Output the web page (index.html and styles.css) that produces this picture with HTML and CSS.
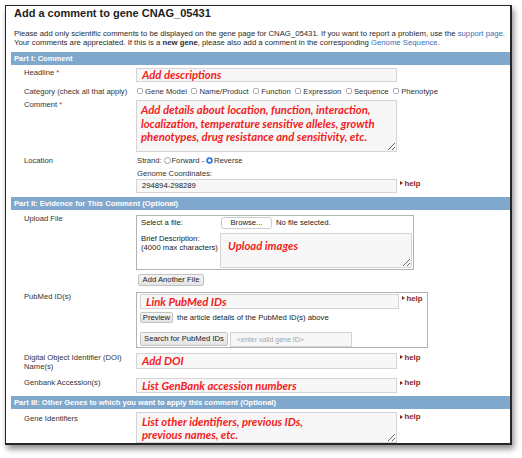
FILE: index.html
```html
<!DOCTYPE html>
<html>
<head>
<meta charset="utf-8">
<title>Add a comment to gene CNAG_05431</title>
<link rel="stylesheet" href="styles.css">
</head>
<body>
<div class="frame">
  <h1 class="title">Add a comment to gene CNAG_05431</h1>
  <p class="intro">Please add only scientific comments to be displayed on the gene page for CNAG_05431. If you want to report a problem, use the <a href="#">support page</a>.<br>Your comments are appreciated. If this is a <b>new gene</b>, please also add a comment in the corresponding <a href="#">Genome Sequence</a>.</p>

  <div class="bar">Part I: Comment</div>

  <div class="row r-headline">
    <div class="label">Headline <span class="req">*</span></div>
    <div class="input w-main h14 red">Add descriptions</div>
  </div>

  <div class="row r-category">
    <div class="label">Category (check all that apply)</div>
    <div class="checks">
      <span class="opt"><i class="cb"></i>Gene Model</span>
      <span class="opt"><i class="cb"></i>Name/Product</span>
      <span class="opt"><i class="cb"></i>Function</span>
      <span class="opt"><i class="cb"></i>Expression</span>
      <span class="opt"><i class="cb"></i>Sequence</span>
      <span class="opt"><i class="cb"></i>Phenotype</span>
    </div>
  </div>

  <div class="row r-comment">
    <div class="label">Comment <span class="req">*</span></div>
    <textarea class="ta ta-comment red">Add details about location, function, interaction,
localization, temperature sensitive alleles, growth
phenotypes, drug resistance and sensitivity, etc.</textarea>
  </div>

  <div class="row r-location">
    <div class="label">Location</div>
    <div class="loc">
      <div class="strand">Strand: <i class="rb"></i>Forward - <i class="rb on"></i>Reverse</div>
      <div class="coord-label">Genome Coordinates:</div>
      <div class="with-help">
        <div class="input w-main h14 plain">294894-298289</div>
        <a class="help" href="#"><i class="tri"></i>help</a>
      </div>
    </div>
  </div>

  <div class="bar bar2">Part II: Evidence for This Comment (Optional)</div>

  <div class="row r-upload">
    <div class="label">Upload File</div>
    <div class="box upload">
      <div class="up-row1">
        <span class="up-left">Select a file:</span>
        <button class="btn btn-browse">Browse...</button>
        <span class="nofile">No file selected.</span>
      </div>
      <div class="up-row2">
        <span class="up-left up-desc">Brief Description:<br>(4000 max characters)</span>
        <textarea class="ta ta-upload red">Upload images</textarea>
      </div>
    </div>
  </div>

  <div class="row r-addfile">
    <div class="label"></div>
    <button class="btn btn-gray btn-add">Add Another File</button>
  </div>

  <div class="row r-pubmed">
    <div class="label">PubMed ID(s)</div>
    <div class="box pubmed">
      <div class="with-help">
        <div class="input w-pub h15 red">Link PubMed IDs</div>
        <a class="help" href="#"><i class="tri"></i>help</a>
      </div>
      <div class="pv-row">
        <button class="btn btn-gray btn-preview">Preview</button>
        <span class="pv-text">the article details of the PubMed ID(s) above</span>
      </div>
      <div class="search-row">
        <button class="btn btn-gray btn-search">Search for PubMed IDs</button>
        <div class="input w-gene h15 ph">&lt;enter valid gene ID&gt;</div>
      </div>
    </div>
  </div>

  <div class="row r-doi">
    <div class="label">Digital Object Identifier (DOI)<br>Name(s)</div>
    <div class="with-help">
      <div class="input w-main h16 red">Add DOI</div>
      <a class="help" href="#"><i class="tri"></i>help</a>
    </div>
  </div>

  <div class="row r-genbank">
    <div class="label">Genbank Accession(s)</div>
    <div class="with-help">
      <div class="input w-main h15 red">List <span class="spell">GenBank</span> accession numbers</div>
      <a class="help" href="#"><i class="tri"></i>help</a>
    </div>
  </div>

  <div class="bar bar3">Part III: Other Genes to which you want to apply this comment (Optional)</div>

  <div class="row r-geneids">
    <div class="label">Gene Identifiers</div>
    <div class="with-help">
      <textarea class="ta ta-gene red">List other identifiers, previous IDs,
previous names, etc.</textarea>
      <a class="help" href="#"><i class="tri"></i>help</a>
    </div>
  </div>

  <div class="band"></div>
</div>
</body>
</html>
```

FILE: styles.css
```css
* { box-sizing: border-box; }

html, body {
  margin: 0;
  padding: 0;
  background: #fff;
}

body {
  width: 522px;
  height: 458px;
  overflow: hidden;
  font-family: "Liberation Sans", Arial, sans-serif;
  color: #333;
}

.frame {
  margin: 5px 0 0 5px;
  width: 507px;
  height: 440px;
  border-style: solid;
  border-color: #262626;
  border-width: 1px 2px 2px 1px;
  box-shadow: 2px 4px 6px rgba(0, 0, 0, 0.45);
  background: #fff;
  overflow: hidden;
}

.title {
  margin: 0;
  padding: 1.2px 0 0 8px;
  font-size: 11px;
  line-height: 13px;
  font-weight: bold;
  color: #1e1e1e;
}

.intro {
  margin: 8.4px 0 0 8px;
  font-size: 7.74px;
  line-height: 9.3px;
  white-space: nowrap;
  color: #2a2a2a;
}

.intro a {
  color: #3a6fb3;
  text-decoration: none;
}

.bar {
  margin: 4.8px 0 0 5px;
  height: 13px;
  padding-left: 3px;
  background: #7fa8cc;
  color: #fff;
  font-weight: bold;
  font-size: 7.6px;
  line-height: 13px;
  white-space: nowrap;
}

.bar2 { margin-top: 4px; }
.bar3 { margin-top: 3px; }

.row {
  display: flex;
  align-items: flex-start;
  padding-left: 18px;
}

.label {
  width: 112px;
  flex: none;
  font-size: 7.65px;
  line-height: 9px;
  color: #333;
  white-space: nowrap;
}

.req { color: #e02020; }

.r-headline { margin-top: 3px; }
.r-category { margin-top: 5px; }
.r-comment { margin-top: 4px; }
.r-location { margin-top: 4px; }
.r-upload { margin-top: 5px; }
.r-upload .label { margin-top: -1px; }
.r-addfile { margin-top: 4px; }
.r-pubmed { margin-top: 6px; }
.r-doi { margin-top: 5px; }
.r-doi .label { padding-top: 0.5px; }
.r-genbank { margin-top: 7px; }
.r-geneids { margin-top: 3px; }
.r-geneids .label { padding-top: 1.5px; }

/* inputs */
.input {
  flex: none;
  border: 1px solid #d4d4d4;
  background: #f7f7f7;
  padding-left: 5px;
  white-space: nowrap;
  overflow: hidden;
}

.w-main { width: 261px; }
.w-pub { width: 259px; }
.w-gene { width: 122px; margin-left: 2px; }

.h14 { height: 14px; line-height: 12px; }
.h15 { height: 15px; line-height: 13px; }
.h16 { height: 16px; line-height: 14px; }

.red {
  font-family: Lato, "Open Sans", sans-serif;
  font-weight: bold;
  font-style: italic;
  color: #f21d1d;
  font-size: 11.3px;
}

.plain {
  font-size: 7.7px;
  color: #222;
}

.ph {
  font-size: 7px;
  color: #a5a5a5;
  padding-left: 6px;
}

.spell {
  text-decoration: underline wavy #e03030;
  text-decoration-thickness: 1px;
  text-underline-offset: 2px;
}

.ta {
  display: block;
  flex: none;
  margin: 0;
  border: 1px solid #d4d4d4;
  background: #f7f7f7;
  padding: 2.5px 4px 0 4px;
  line-height: 13.4px;
  white-space: pre;
  overflow: hidden;
  resize: both;
  outline: none;
}

.ta-comment { width: 261px; height: 52px; }
.ta-gene { width: 261px; height: 31px; padding-left: 5px; padding-top: 1.5px; line-height: 13px; }
.ta-upload { width: 192px; height: 35px; padding: 5px 0 0 7px; }

/* category */
.checks {
  display: flex;
  align-items: center;
  height: 9px;
  gap: 4.6px;
  margin-left: 1px;
  font-size: 7.7px;
  color: #333;
}

.opt {
  display: inline-flex;
  align-items: center;
  gap: 2px;
  white-space: nowrap;
}

.cb {
  display: inline-block;
  width: 6px;
  height: 6px;
  border: 1px solid #a9a9a9;
  border-radius: 1.5px;
  background: #fff;
}

/* location */
.loc { display: flex; flex-direction: column; }

.strand {
  display: flex;
  align-items: center;
  height: 9px;
  margin-left: 1px;
  font-size: 7.7px;
  color: #333;
  white-space: pre;
}

.rb {
  display: inline-block;
  width: 7px;
  height: 7px;
  border-radius: 50%;
  border: 1px solid #a5a5a5;
  background: #fff;
  margin-right: 0.5px;
}

.rb.on {
  border-color: #2d7de0;
  background: radial-gradient(circle, #fff 0 1.2px, #2f80e6 1.6px);
}

.coord-label {
  margin-top: 4px;
  margin-left: 1px;
  height: 9px;
  font-size: 7.7px;
  line-height: 9px;
  color: #333;
}

.loc .with-help { margin-top: 1px; }

/* help */
.with-help {
  display: flex;
  align-items: flex-start;
}

.help {
  display: inline-flex;
  align-items: center;
  margin-left: 3px;
  height: 9px;
  font-size: 7.8px;
  font-weight: bold;
  color: #862525;
  text-decoration: none;
}

.tri {
  display: inline-block;
  width: 0;
  height: 0;
  border-left: 3px solid #862525;
  border-top: 2.5px solid transparent;
  border-bottom: 2.5px solid transparent;
  margin-right: 1.5px;
}

/* boxes */
.box {
  flex: none;
  border: 1px solid #b3b3b3;
  background: #fff;
}

.upload {
  width: 278px;
  height: 55px;
  padding: 1px 1px 0 4px;
}

.up-row1 {
  display: flex;
  align-items: center;
  height: 12px;
  font-size: 7.7px;
  color: #222;
}

.up-left {
  width: 79px;
  flex: none;
  font-size: 7.7px;
  color: #222;
}

.up-row2 {
  display: flex;
  align-items: flex-start;
  margin-top: 4px;
}

.up-desc {
  line-height: 9px;
  padding-top: 1.5px;
  white-space: nowrap;
}

.nofile { margin-left: 4px; }

.btn {
  margin: 0;
  padding: 0;
  font-family: "Liberation Sans", Arial, sans-serif;
  font-size: 7.7px;
  color: #222;
  white-space: nowrap;
}

.btn-browse {
  width: 51px;
  height: 12px;
  margin-left: 1px;
  border: 1px solid #cdcdcd;
  border-radius: 3px;
  background: #fff;
}

.btn-gray {
  border: 1px solid #c3c3c3;
  border-radius: 2px;
  background: linear-gradient(#f4f4f4, #e4e4e4);
}

.btn-add {
  width: 66px;
  height: 12px;
  margin-left: 2px;
}

.pubmed {
  width: 292px;
  height: 56px;
  padding: 1px 0 0 3px;
}

.pv-row {
  display: flex;
  align-items: center;
  margin-top: 3px;
  height: 11px;
}

.btn-preview { width: 33px; height: 11px; }

.pv-text {
  margin-left: 4px;
  font-size: 7.7px;
  color: #222;
  white-space: nowrap;
}

.search-row {
  display: flex;
  align-items: flex-start;
  margin-top: 9px;
}

.btn-search { width: 88px; height: 14px; }

.band {
  height: 2px;
  background: #c4c4c4;
}
```
